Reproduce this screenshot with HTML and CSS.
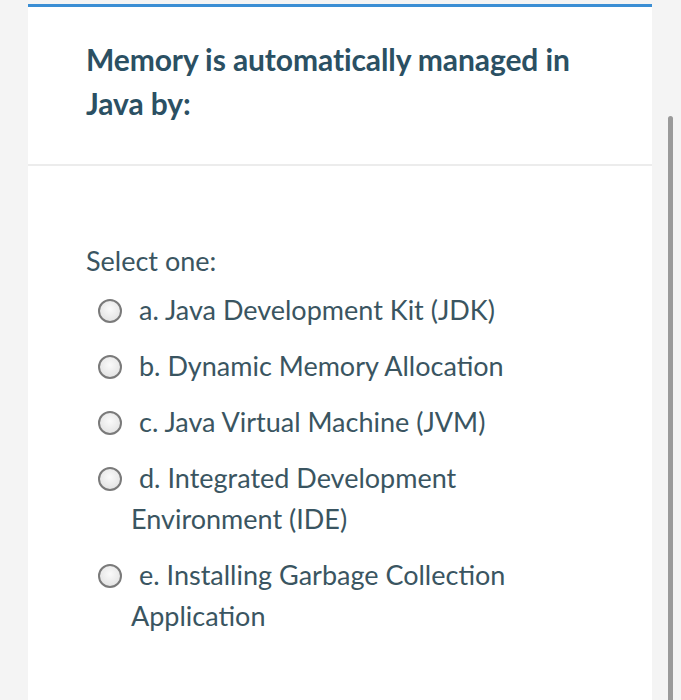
FILE: index.html
```html
<!DOCTYPE html>
<html>
<head>
  <link rel="stylesheet" href="styles.css">
</head>

<body>
  <div class="page">
    <div class="card">
      <!-- Question header -->
      <div class="qtext">
        <h2>Memory is automatically managed in Java by:</h2>
      </div>

      <!-- Answers -->
      <div class="answer">
        <p class="prompt">Select one:</p>
        <label class="option"><span class="radio"></span>a. Java Development Kit (JDK)</label>
        <label class="option"><span class="radio"></span>b. Dynamic Memory Allocation</label>
        <label class="option"><span class="radio"></span>c. Java Virtual Machine (JVM)</label>
        <label class="option"><span class="radio"></span>d. Integrated Development Environment (IDE)</label>
        <label class="option"><span class="radio"></span>e. Installing Garbage Collection Application</label>
      </div>
    </div>
    <div class="scrollbar"></div>
  </div>
</body>
</html>
```

FILE: styles.css
```css
html, body {
  margin: 0;
  padding: 0;
  background-color: #f4f4f4;
  font-family: Lato, "Open Sans", sans-serif;
}

.page {
  width: 681px;
  height: 700px;
  position: relative;
  overflow: hidden;
  padding: 4px 0 0 28px;
  box-sizing: border-box;
}

.card {
  width: 624px;
  height: 800px;
  background-color: #fff;
  border-top: solid 3px #3b8ed4;
}

.qtext {
  padding: 30px 40px 39px 58px;
  border-bottom: solid 2px #ececec;
}

h2 {
  margin: 0;
  font-size: 30px;
  line-height: 44px;
  font-weight: 700;
  color: #2b5063;
  letter-spacing: -0.1px;
  max-width: 500px;
}

.answer {
  padding: 75px 40px 0 58px;
  color: #3a5561;
}

.prompt {
  margin: 0 0 8px 0;
  font-size: 27px;
  line-height: 40px;
}

/* wrapped lines of an option start under the label, radio hangs left */
.option {
  display: block;
  font-size: 27px;
  line-height: 41px;
  margin-bottom: 15px;
  padding-left: 45px;
  max-width: 390px;
}

.radio {
  display: inline-block;
  vertical-align: -3px;
  width: 20px;
  height: 20px;
  margin: 0 17px 0 -33px;
  border-radius: 50%;
  border: solid 2px #7a7a7a;
  background: radial-gradient(circle at 50% 40%, #fafafa 0%, #e6e6e6 70%, #d8d8d8 100%);
}

/* mobile overlay scrollbar */
.scrollbar {
  position: absolute;
  left: 668px;
  top: 116px;
  width: 5px;
  height: 600px;
  border-radius: 3px;
  background-color: #9a9a9a;
}
```
